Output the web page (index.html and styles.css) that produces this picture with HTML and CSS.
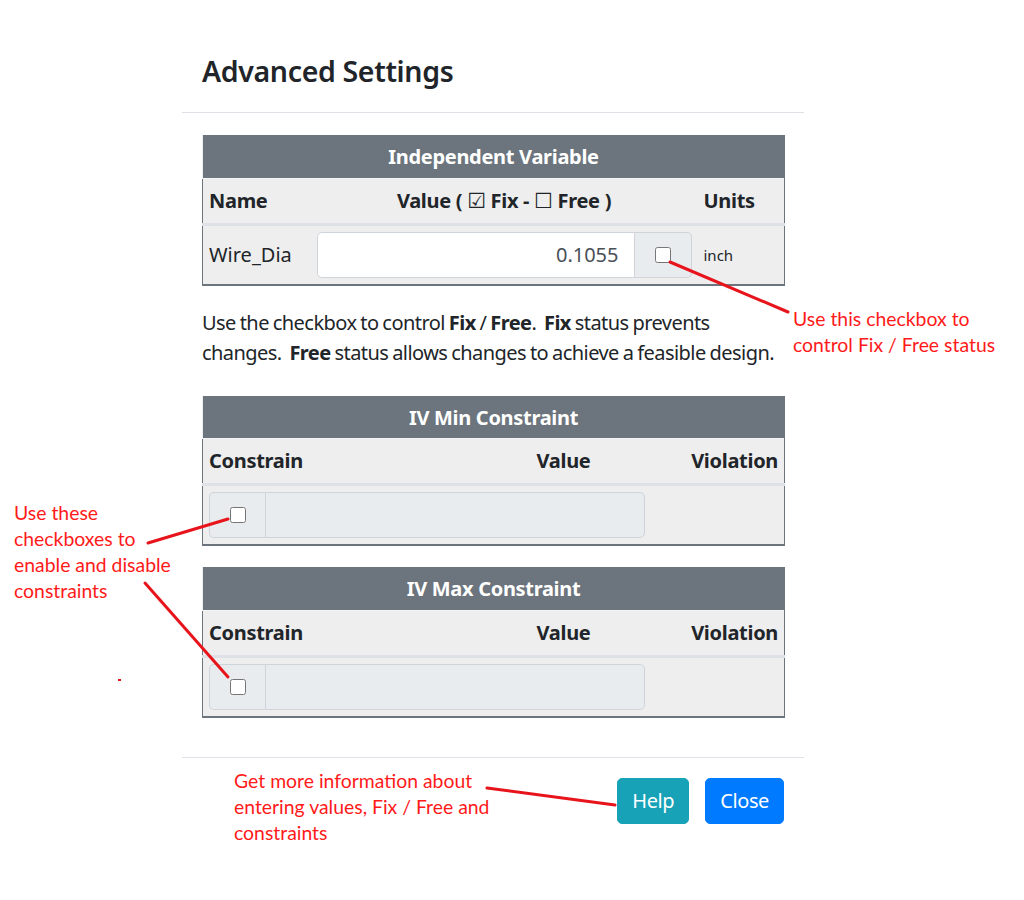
FILE: index.html
```html
<!DOCTYPE html>
<html>
<head>
<meta charset="utf-8">
<title>Advanced Settings</title>
<link rel="stylesheet" href="styles.css">
</head>
<body>
<div class="page">
  <div class="modal">
    <div class="modal-header">
      <h4 class="modal-title">Advanced Settings</h4>
    </div>
    <div class="modal-body">
      <table class="tbl tbl-iv">
        <colgroup><col class="c-name"><col class="c-value"><col class="c-units"></colgroup>
        <thead>
          <tr class="title-row"><th colspan="3">Independent Variable</th></tr>
          <tr class="head-row">
            <th class="left">Name</th>
            <th class="center">Value ( <span class="box">&#9745;</span> Fix - <span class="box">&#9744;</span> Free )</th>
            <th class="left">Units</th>
          </tr>
        </thead>
        <tbody>
          <tr class="body-row">
            <td>Wire_Dia</td>
            <td>
              <div class="input-group">
                <input class="form-control num" type="text" value="0.1055">
                <div class="addon addon-right"><input type="checkbox" class="cb"></div>
              </div>
            </td>
            <td class="units">inch</td>
          </tr>
        </tbody>
      </table>

      <p class="note"><span class="line">Use the checkbox to control <b>Fix</b> / <b>Free</b>.&nbsp; <b>Fix</b> status prevents</span> <span class="line">changes.&nbsp; <b>Free</b> status allows changes to achieve a feasible design.</span></p>

      <table class="tbl tbl-con first-con">
        <colgroup><col class="k1"><col class="k2"><col class="k3"><col class="k4"></colgroup>
        <thead>
          <tr class="title-row"><th colspan="4">IV Min Constraint</th></tr>
          <tr class="head-row">
            <th class="left">Constrain</th>
            <th class="right">Value</th>
            <th class="right" colspan="2">Violation</th>
          </tr>
        </thead>
        <tbody>
          <tr class="body-row">
            <td colspan="3">
              <div class="input-group">
                <div class="addon addon-left"><input type="checkbox" class="cb"></div>
                <input class="form-control disabled" type="text" disabled>
              </div>
            </td>
            <td></td>
          </tr>
        </tbody>
      </table>

      <table class="tbl tbl-con last-con">
        <colgroup><col class="k1"><col class="k2"><col class="k3"><col class="k4"></colgroup>
        <thead>
          <tr class="title-row"><th colspan="4">IV Max Constraint</th></tr>
          <tr class="head-row">
            <th class="left">Constrain</th>
            <th class="right">Value</th>
            <th class="right" colspan="2">Violation</th>
          </tr>
        </thead>
        <tbody>
          <tr class="body-row">
            <td colspan="3">
              <div class="input-group">
                <div class="addon addon-left"><input type="checkbox" class="cb"></div>
                <input class="form-control disabled" type="text" disabled>
              </div>
            </td>
            <td></td>
          </tr>
        </tbody>
      </table>
    </div>
    <div class="modal-footer">
      <button class="btn btn-info">Help</button>
      <button class="btn btn-primary">Close</button>
    </div>
  </div>

  <svg class="arrows" width="1024" height="900" viewBox="0 0 1024 900">
    <line x1="670" y1="262" x2="788" y2="312"/>
    <line x1="148" y1="543" x2="228" y2="519"/>
    <line x1="145" y1="583" x2="228" y2="677"/>
    <line x1="487" y1="788" x2="615" y2="805"/>
    <rect x="118" y="679" width="3" height="2" class="dot"/>
  </svg>
  <div class="note-red n1">Use this checkbox to<br>control Fix / Free status</div>
  <div class="note-red n2">Use these<br>checkboxes to<br>enable and disable<br>constraints</div>
  <div class="note-red n3">Get more information about<br>entering values, Fix / Free and<br>constraints</div>
</div>
</body>
</html>
```

FILE: styles.css
```css
* { box-sizing: border-box; }
html, body { margin: 0; padding: 0; background: #fff; }
body {
  font-family: "Noto Sans", "Open Sans", "DejaVu Sans", sans-serif;
  font-size: 20px;
  line-height: 30px;
  color: #212529;
}
.page { position: relative; width: 1024px; height: 900px; overflow: hidden; }

.modal { width: 622px; margin: 35px 0 0 182px; background: #fff; }
.modal-header { padding: 17px 20px 22px 20px; border-bottom: 1px solid #dee2e6; }
.modal-title { margin: 0; font-size: 28.5px; line-height: 38px; font-weight: 600; letter-spacing: -0.35px; color: #212529; }

.modal-body { padding: 22px 20px 20px 20px; }

.tbl { width: 582px; border-collapse: collapse; table-layout: fixed; background: #eeeeee; }
.tbl th, .tbl td { padding: 6px; vertical-align: middle; }
.title-row th {
  background: #6c757d; color: #fff; font-weight: 700; text-align: center;
  height: 43px; letter-spacing: -0.3px; padding-top: 7px; padding-bottom: 5px;
}
.head-row th {
  font-weight: 700; height: 46px; letter-spacing: -0.3px;
  border-top: 1px solid #f4f4f4;
  border-bottom: 3px solid #dee2e6;
}
.head-row th:first-child { border-left: 1px solid #6c757d; }
.head-row th:last-child { border-right: 1px solid #6c757d; }
.body-row td { height: 60px; border-bottom: 2px solid #6c757d; }
.body-row td:first-child { border-left: 1px solid #6c757d; }
.body-row td:last-child { border-right: 1px solid #6c757d; }
.left { text-align: left; }
.center { text-align: center; }
.right { text-align: right; }
.box { font-weight: 400; font-family: "DejaVu Sans", sans-serif; font-size: 21px; }

.c-name { width: 108px; }
.c-value { width: 387px; }
.c-units { width: 87px; }
.units { font-size: 15px; padding-left: 6px !important; color: #212529; }

.k1 { width: 198px; }
.k2 { width: 196px; }
.k3 { width: 54px; }
.k4 { width: 134px; }

.input-group { display: flex; height: 46px; }
.form-control {
  flex: 1; min-width: 0; height: 46px; margin: 0;
  border: 1px solid #ced4da; font: inherit; color: #495057;
  padding: 7px 15px; background: #fff;
}
.num { text-align: right; border-radius: 5px 0 0 5px; }
.disabled { background: #e9ecef; border-radius: 0 5px 5px 0; }
.addon {
  width: 57px; display: flex; align-items: center; justify-content: center;
  background: #e9ecef; border: 1px solid #ced4da;
}
.addon-right { border-left: none; border-radius: 0 5px 5px 0; }
.addon-left { width: 56px; border-right: none; border-radius: 5px 0 0 5px; }
.cb { width: 16px; height: 16px; margin: 0; }

.tbl-iv .body-row td:first-child { padding-left: 6px; }
.note { margin: 22px 0 28px 0; letter-spacing: -0.55px; word-spacing: -0.8px; }
.note .line { white-space: nowrap; }
.first-con { margin-bottom: 21px; }
.last-con { margin-bottom: 19px; }

.modal-footer {
  border-top: 1px solid #dee2e6; padding: 20px 20px;
  display: flex; justify-content: flex-end; gap: 16px;
}
.btn {
  font: inherit; line-height: 30px; padding: 7px 14px; border-radius: 5px;
  border: 1px solid transparent; color: #fff; cursor: pointer; letter-spacing: -0.4px;
}
.btn-info { background: #17a2b8; border-color: #17a2b8; }
.btn-primary { background: #007bff; border-color: #007bff; }

.arrows { position: absolute; left: 0; top: 0; pointer-events: none; }
.arrows line { stroke: #e8141c; stroke-width: 3; stroke-linecap: round; }
.arrows .dot { fill: #e8141c; }

.note-red {
  position: absolute; color: #ff1a1a;
  font-family: Lato, "Liberation Sans", sans-serif; font-size: 19.4px; line-height: 26px;
}
.n1 { left: 793px; top: 306px; }
.n2 { left: 14px; top: 500px; }
.n3 { left: 234px; top: 768px; }
```
